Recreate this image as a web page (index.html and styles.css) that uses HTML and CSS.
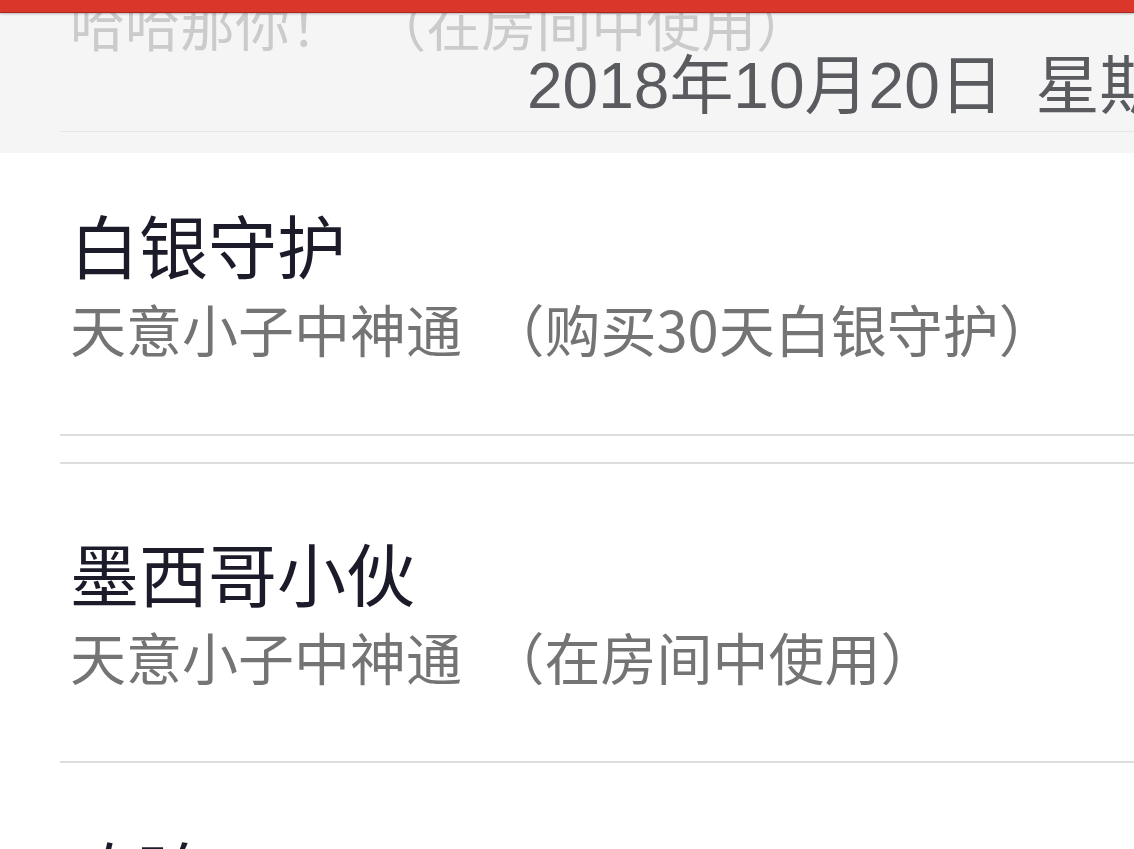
FILE: index.html
```html
<!DOCTYPE html>
<html lang="zh-CN">
<head>
    <meta charset="UTF-8">
    <meta name="viewport" content="width=device-width, initial-scale=1.0">
    <title>礼物记录</title>
    <link rel="stylesheet" href="styles.css">
</head>
<body>

    <div id="topbar"></div>

    <div id="header">
        <div class="faded">哈哈那你！ （在房间中使用）</div>
        <div class="date">2018年10月20日 星期六</div>
        <div class="rule"></div>
    </div>

    <div id="list">
        <div class="item first">
            <div class="title">白银守护</div>
            <div class="sub">天意小子中神通 （购买30天白银守护）</div>
        </div>

        <div class="spacer"></div>

        <div class="item">
            <div class="title">墨西哥小伙</div>
            <div class="sub">天意小子中神通 （在房间中使用）</div>
        </div>

        <div class="item last">
            <div class="title">玫瑰</div>
            <div class="sub">天意小子中神通 （在房间中使用）</div>
        </div>
    </div>

</body>
</html>
```

FILE: styles.css
```css
html, body {
    margin: 0;
    padding: 0;
    height: 100%;
    overflow: hidden;
}

body {
    font-family: "Liberation Sans", "Noto Sans CJK SC", sans-serif;
    background-color: #ffffff;
}

#topbar {
    height: 12px;
    background-color: #da3629;
    border-bottom: 1px solid #a8281f;
    box-shadow: 0 1px 2px rgba(0, 0, 0, 0.25);
    position: relative;
    z-index: 2;
}

#header {
    height: 140px;
    background-color: #f5f5f5;
    overflow: hidden;
    display: flex;
    flex-direction: column;
}

#header .faded {
    font-family: "Noto Sans CJK SC", sans-serif;
    font-size: 55px;
    line-height: 60px;
    margin-top: -21px;
    padding-left: 70px;
    color: #cbcbcb;
    word-spacing: 14px;
    white-space: nowrap;
}

#header .date {
    font-size: 64px;
    line-height: 64px;
    margin-top: 2px;
    padding-left: 527px;
    color: #5a5b5f;
    word-spacing: 14px;
    white-space: nowrap;
}

#header .rule {
    height: 1px;
    margin: 13px 0 0 60px;
    background-color: #e6e6e6;
}

#list {
    background-color: #ffffff;
}

.item {
    margin-left: 60px;
    padding: 68px 0 70px 10px;
    border-bottom: 2px solid #dddddd;
}

.item.first {
    padding-top: 51px;
    padding-bottom: 71px;
}

.item.last {
    border-bottom: none;
}

.spacer {
    height: 26px;
    margin-left: 60px;
    border-bottom: 2px solid #dddddd;
}

.title {
    font-family: "Noto Sans CJK SC", sans-serif;
    font-size: 69px;
    line-height: 80px;
    color: #1b1b29;
}

.sub {
    font-family: "Noto Sans CJK SC", sans-serif;
    font-size: 56px;
    line-height: 70px;
    margin-top: 9px;
    color: #747474;
    word-spacing: 14px;
    white-space: nowrap;
}
```
